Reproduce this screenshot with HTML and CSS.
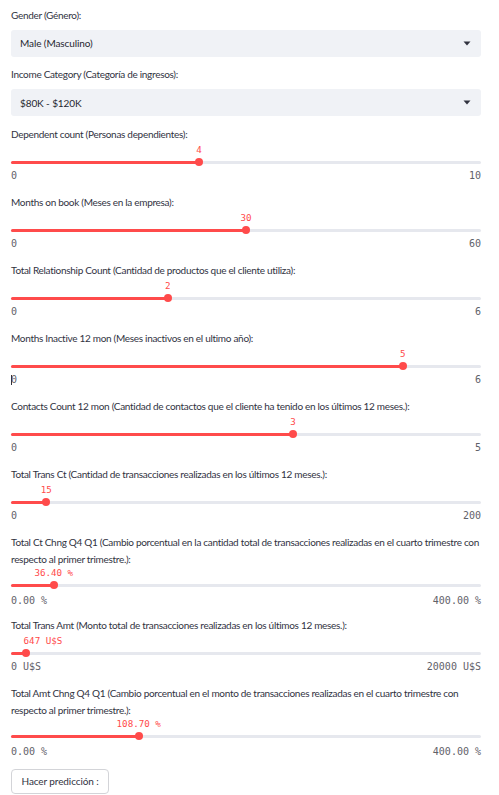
FILE: index.html
```html
<!DOCTYPE html>
<html lang="es">
<head>
<meta charset="utf-8">
<title>Predicción</title>
<link rel="stylesheet" href="styles.css">
</head>
<body>
<div class="page">
  <div class="field select-field">
    <div class="label">Gender (Género):</div>
    <div class="select"><span class="select-value">Male (Masculino)</span><svg class="arrow" width="8" height="5" viewBox="0 0 8 5"><path d="M0.5 0.5 L7.5 0.5 L4 4.5 Z" fill="#31333f"/></svg></div>
  </div>
  <div class="field select-field">
    <div class="label">Income Category (Categoría de ingresos):</div>
    <div class="select"><span class="select-value">$80K - $120K</span><svg class="arrow" width="8" height="5" viewBox="0 0 8 5"><path d="M0.5 0.5 L7.5 0.5 L4 4.5 Z" fill="#31333f"/></svg></div>
  </div>

  <div class="field slider-field">
    <div class="label">Dependent count (Personas dependientes):</div>
    <div class="slider">
      <div class="value-row"><span class="value" style="left:40%">4</span></div>
      <div class="track"><div class="fill" style="width:40%"></div><div class="thumb" style="left:40%"></div></div>
      <div class="ticks"><span>0</span><span>10</span></div>
    </div>
  </div>

  <div class="field slider-field">
    <div class="label">Months on book (Meses en la empresa):</div>
    <div class="slider">
      <div class="value-row"><span class="value" style="left:50%">30</span></div>
      <div class="track"><div class="fill" style="width:50%"></div><div class="thumb" style="left:50%"></div></div>
      <div class="ticks"><span>0</span><span>60</span></div>
    </div>
  </div>

  <div class="field slider-field">
    <div class="label">Total Relationship Count (Cantidad de productos que el cliente utiliza):</div>
    <div class="slider">
      <div class="value-row"><span class="value" style="left:33.333%">2</span></div>
      <div class="track"><div class="fill" style="width:33.333%"></div><div class="thumb" style="left:33.333%"></div></div>
      <div class="ticks"><span>0</span><span>6</span></div>
    </div>
  </div>

  <div class="field slider-field">
    <div class="label">Months Inactive 12 mon (Meses inactivos en el ultimo año):</div>
    <div class="slider">
      <div class="value-row"><span class="value" style="left:83.333%">5</span></div>
      <div class="track"><div class="fill" style="width:83.333%"></div><div class="thumb" style="left:83.333%"></div></div>
      <div class="ticks"><span class="with-caret">0</span><span>6</span></div>
    </div>
  </div>

  <div class="field slider-field">
    <div class="label">Contacts Count 12 mon (Cantidad de contactos que el cliente ha tenido en los últimos 12 meses.):</div>
    <div class="slider">
      <div class="value-row"><span class="value" style="left:60%">3</span></div>
      <div class="track"><div class="fill" style="width:60%"></div><div class="thumb" style="left:60%"></div></div>
      <div class="ticks"><span>0</span><span>5</span></div>
    </div>
  </div>

  <div class="field slider-field">
    <div class="label">Total Trans Ct (Cantidad de transacciones realizadas en los últimos 12 meses.):</div>
    <div class="slider">
      <div class="value-row"><span class="value" style="left:7.5%">15</span></div>
      <div class="track"><div class="fill" style="width:7.5%"></div><div class="thumb" style="left:7.5%"></div></div>
      <div class="ticks"><span>0</span><span>200</span></div>
    </div>
  </div>

  <div class="field slider-field multi">
    <div class="label">Total Ct Chng Q4 Q1 (Cambio porcentual en la cantidad total de transacciones realizadas en el cuarto trimestre con respecto al primer trimestre.):</div>
    <div class="slider">
      <div class="value-row"><span class="value" style="left:9.1%">36.40 %</span></div>
      <div class="track"><div class="fill" style="width:9.1%"></div><div class="thumb" style="left:9.1%"></div></div>
      <div class="ticks"><span>0.00 %</span><span>400.00 %</span></div>
    </div>
  </div>

  <div class="field slider-field">
    <div class="label">Total Trans Amt (Monto total de transacciones realizadas en los últimos 12 meses.):</div>
    <div class="slider">
      <div class="value-row"><span class="value" style="left:6.8%">647 U$S</span></div>
      <div class="track"><div class="fill" style="width:3.235%"></div><div class="thumb" style="left:3.235%"></div></div>
      <div class="ticks"><span>0 U$S</span><span>20000 U$S</span></div>
    </div>
  </div>

  <div class="field slider-field multi">
    <div class="label">Total Amt Chng Q4 Q1 (Cambio porcentual en el monto de transacciones realizadas en el cuarto trimestre con respecto al primer trimestre.):</div>
    <div class="slider">
      <div class="value-row"><span class="value" style="left:27.175%">108.70 %</span></div>
      <div class="track"><div class="fill" style="width:27.175%"></div><div class="thumb" style="left:27.175%"></div></div>
      <div class="ticks"><span>0.00 %</span><span>400.00 %</span></div>
    </div>
  </div>

  <button class="btn" type="button">Hacer predicción :</button>
</div>
</body>
</html>
```

FILE: styles.css
```css
* { box-sizing: border-box; }

body {
  margin: 0;
  background: #ffffff;
  color: #31333f;
  font-family: Lato, "Noto Sans", sans-serif;
}

.page {
  padding: 6.5px 18px 0 11px;
  display: flex;
  flex-direction: column;
}

.label {
  font-size: 10px;
  letter-spacing: -0.3px;
  line-height: 17px;
  color: #31333f;
}

.select-field {
  margin-bottom: 9.5px;
}

.select {
  margin-top: 6px;
  height: 27px;
  background: #f0f2f6;
  border-radius: 3px;
  display: flex;
  align-items: center;
  justify-content: space-between;
  padding: 0 10px 0 9px;
}

.select-value {
  font-size: 10px;
  letter-spacing: -0.1px;
  color: #262730;
}

.arrow { display: block; }

.slider-field {
  margin-bottom: 10.5px;
}

.slider-field.multi {
  margin-bottom: 9px;
}

.slider {
  display: flex;
  flex-direction: column;
}

.value-row {
  position: relative;
  height: 13px;
}

.multi .value-row {
  height: 11px;
}

.value {
  position: absolute;
  top: 0;
  transform: translateX(-50%);
  font-family: "DejaVu Sans Mono", monospace;
  font-size: 9.2px;
  line-height: 13px;
  color: #ff4b4b;
  white-space: nowrap;
}

.multi .value {
  top: -2px;
}

.track {
  position: relative;
  height: 3px;
  margin: 5px 0 5.5px;
  background: #e6e8ee;
  border-radius: 2px;
}

.multi .track {
  margin-bottom: 7px;
}

.fill {
  height: 100%;
  background: #ff4b4b;
  border-radius: 2px;
}

.thumb {
  position: absolute;
  top: 50%;
  width: 8px;
  height: 8px;
  margin: -4px 0 0 -4px;
  border-radius: 50%;
  background: #ff4b4b;
}

.ticks {
  display: flex;
  justify-content: space-between;
  font-family: "DejaVu Sans Mono", monospace;
  font-size: 10px;
  line-height: 14px;
  color: #5f6169;
}

.with-caret {
  position: relative;
}

.with-caret::before {
  content: "";
  position: absolute;
  left: 0;
  top: 2px;
  width: 1px;
  height: 10px;
  background: #31333f;
}

.btn {
  align-self: flex-start;
  margin-top: 1px;
  height: 25px;
  padding: 0 9.5px;
  background: #ffffff;
  border: 1px solid #d3d4d8;
  border-radius: 4px;
  font-family: Lato, "Noto Sans", sans-serif;
  font-size: 10px;
  letter-spacing: -0.1px;
  color: #31333f;
}
```
